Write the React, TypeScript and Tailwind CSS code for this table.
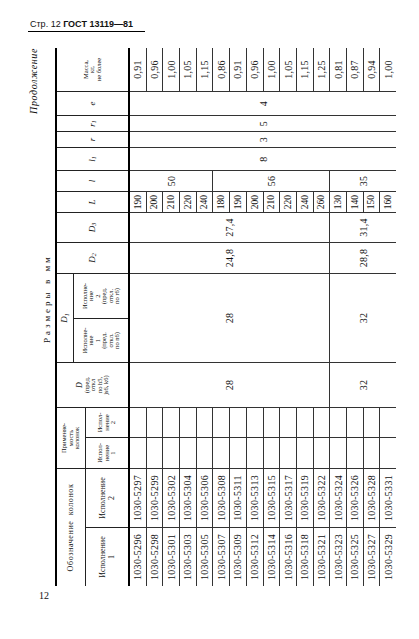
const ROWS = [
  ['1030-5296', '1030-5297', '190', '0,91'],
  ['1030-5298', '1030-5299', '200', '0,96'],
  ['1030-5301', '1030-5302', '210', '1,00'],
  ['1030-5303', '1030-5304', '220', '1,05'],
  ['1030-5305', '1030-5306', '240', '1,15'],
  ['1030-5307', '1030-5308', '180', '0,86'],
  ['1030-5309', '1030-5311', '190', '0,91'],
  ['1030-5312', '1030-5313', '200', '0,96'],
  ['1030-5314', '1030-5315', '210', '1,00'],
  ['1030-5316', '1030-5317', '220', '1,05'],
  ['1030-5318', '1030-5319', '240', '1,15'],
  ['1030-5321', '1030-5322', '260', '1,25'],
  ['1030-5323', '1030-5324', '130', '0,81'],
  ['1030-5325', '1030-5326', '140', '0,87'],
  ['1030-5327', '1030-5328', '150', '0,94'],
  ['1030-5329', '1030-5331', '160', '1,00'],
];

const COLS =
  'grid-cols-[58px_58px_30px_29px_44px_43px_44px_30px_29px_20px_20px_22px_15px_15px_23px_43px]';

const cell = 'bg-white flex items-center justify-center text-center';
const small = 'text-[6.5px] leading-[6.5px]';
const sym = 'italic text-[9px]';

function HeaderGrid() {
  return (
    <div
      className={`grid ${COLS} grid-rows-[16px_11px_42px] grid-flow-col gap-px bg-[#222]`}
    >
      <div className={`${cell} col-span-2 row-span-2 text-[8px] tracking-[0.6px]`}>
        Обозначение&nbsp;&nbsp;колонок
      </div>
      <div className={`${cell} text-[8px] leading-[9px]`}>
        Исполнение
        <br />1
      </div>
      <div className={`${cell} text-[8px] leading-[9px]`}>
        Исполнение
        <br />2
      </div>

      <div className={`${cell} col-span-2 row-span-2 ${small}`}>
        Применяе-
        <br />
        мость
        <br />
        колонок
      </div>
      <div className={`${cell} ${small}`}>
        Испол-
        <br />
        нение
        <br />1
      </div>
      <div className={`${cell} ${small}`}>
        Испол-
        <br />
        нение
        <br />2
      </div>

      <div className={`${cell} row-span-3 ${small}`}>
        <span>
          <i className="text-[8px] leading-[8px]">D</i>
          <br />
          (пред.
          <br />
          откл
          <br />
          по h5,
          <br />
          js6, k6)
        </span>
      </div>

      <div className={`${cell} col-span-2 ${sym}`}>
        D<sub className="text-[6px]">1</sub>
      </div>
      <div className={`${cell} row-span-2 ${small}`}>
        Исполне-
        <br />
        ние
        <br />1
        <br />
        (пред.
        <br />
        откл.
        <br />
        по n6)
      </div>
      <div className={`${cell} row-span-2 ${small}`}>
        Исполне-
        <br />
        ние
        <br />2
        <br />
        (пред.
        <br />
        откл.
        <br />
        по r6)
      </div>

      <div className={`${cell} row-span-3 ${sym}`}>
        D<sub className="text-[6px]">2</sub>
      </div>
      <div className={`${cell} row-span-3 ${sym}`}>
        D<sub className="text-[6px]">3</sub>
      </div>
      <div className={`${cell} row-span-3 ${sym}`}>L</div>
      <div className={`${cell} row-span-3 ${sym}`}>l</div>
      <div className={`${cell} row-span-3 ${sym}`}>
        l<sub className="text-[6px]">1</sub>
      </div>
      <div className={`${cell} row-span-3 ${sym}`}>r</div>
      <div className={`${cell} row-span-3 ${sym}`}>
        r<sub className="text-[6px]">1</sub>
      </div>
      <div className={`${cell} row-span-3 ${sym}`}>e</div>
      <div className={`${cell} row-span-3 ${small}`}>
        Масса,
        <br />
        кг,
        <br />
        не более
      </div>
    </div>
  );
}

function DataGrid() {
  const num = 'text-[10px] tracking-[0.3px]';
  return (
    <div
      className={`grid ${COLS} grid-rows-[repeat(16,minmax(0,1fr))] grid-flow-col gap-px bg-[#333] h-[266px]`}
    >
      {ROWS.map((r) => (
        <div key={'a' + r[0]} className={`${cell} ${num}`}>
          {r[0]}
        </div>
      ))}
      {ROWS.map((r) => (
        <div key={'b' + r[1]} className={`${cell} ${num}`}>
          {r[1]}
        </div>
      ))}
      {ROWS.map((r) => (
        <div key={'c' + r[0]} className={cell} />
      ))}
      {ROWS.map((r) => (
        <div key={'d' + r[0]} className={cell} />
      ))}

      <div className={`${cell} row-span-12 ${num}`}>28</div>
      <div className={`${cell} row-span-4 ${num}`}>32</div>

      <div className={`${cell} col-span-2 row-span-12 ${num}`}>28</div>
      <div className={`${cell} col-span-2 row-span-4 ${num}`}>32</div>

      <div className={`${cell} row-span-12 ${num}`}>24,8</div>
      <div className={`${cell} row-span-4 ${num}`}>28,8</div>

      <div className={`${cell} row-span-12 ${num}`}>27,4</div>
      <div className={`${cell} row-span-4 ${num}`}>31,4</div>

      {ROWS.map((r, i) => (
        <div key={'L' + i} className={`${cell} text-[9.5px]`}>
          {r[2]}
        </div>
      ))}

      <div className={`${cell} row-span-5 ${num}`}>50</div>
      <div className={`${cell} row-span-7 ${num}`}>56</div>
      <div className={`${cell} row-span-4 ${num}`}>35</div>

      <div className={`${cell} row-span-16 ${num}`}>8</div>
      <div className={`${cell} row-span-16 ${num}`}>3</div>
      <div className={`${cell} row-span-16 ${num}`}>5</div>
      <div className={`${cell} row-span-16 ${num}`}>4</div>

      {ROWS.map((r, i) => (
        <div key={'m' + i} className={`${cell} ${num}`}>
          {r[3]}
        </div>
      ))}
    </div>
  );
}

export default function App() {
  return (
    <div className="w-[419px] h-[639px] bg-white text-[#111] flex flex-col font-['Liberation_Serif',serif] overflow-hidden">
      <div className="ml-[28px] mt-[19px] w-[117px] border-b-[1.5px] border-black pb-[2px] pl-[2px] text-[9px] leading-[10px] font-['Liberation_Sans',sans-serif]">
        Стр. 12 <b>ГОСТ 13119—81</b>
      </div>

      {/* the table is printed sideways on the page */}
      <div className="ml-[26px] mt-[16px] w-[372px] h-[538px]">
        <div className="w-[538px] h-[372px] origin-top-left translate-y-[538px] -rotate-90 flex flex-col">
          <div className="h-[14px] flex justify-end items-center italic text-[10px] tracking-[0.6px]">
            Продолжение
          </div>
          <div className="h-[15px] flex items-center pl-[243px] text-[9px] tracking-[3px]">
            Размеры в мм
          </div>
          <div className="h-[2px] bg-black" />
          <HeaderGrid />
          <div className="h-[2px] bg-black" />
          <DataGrid />
        </div>
      </div>

      <div className="ml-[39px] mt-[5px] text-[10px] leading-[10px]">12</div>
    </div>
  );
}
